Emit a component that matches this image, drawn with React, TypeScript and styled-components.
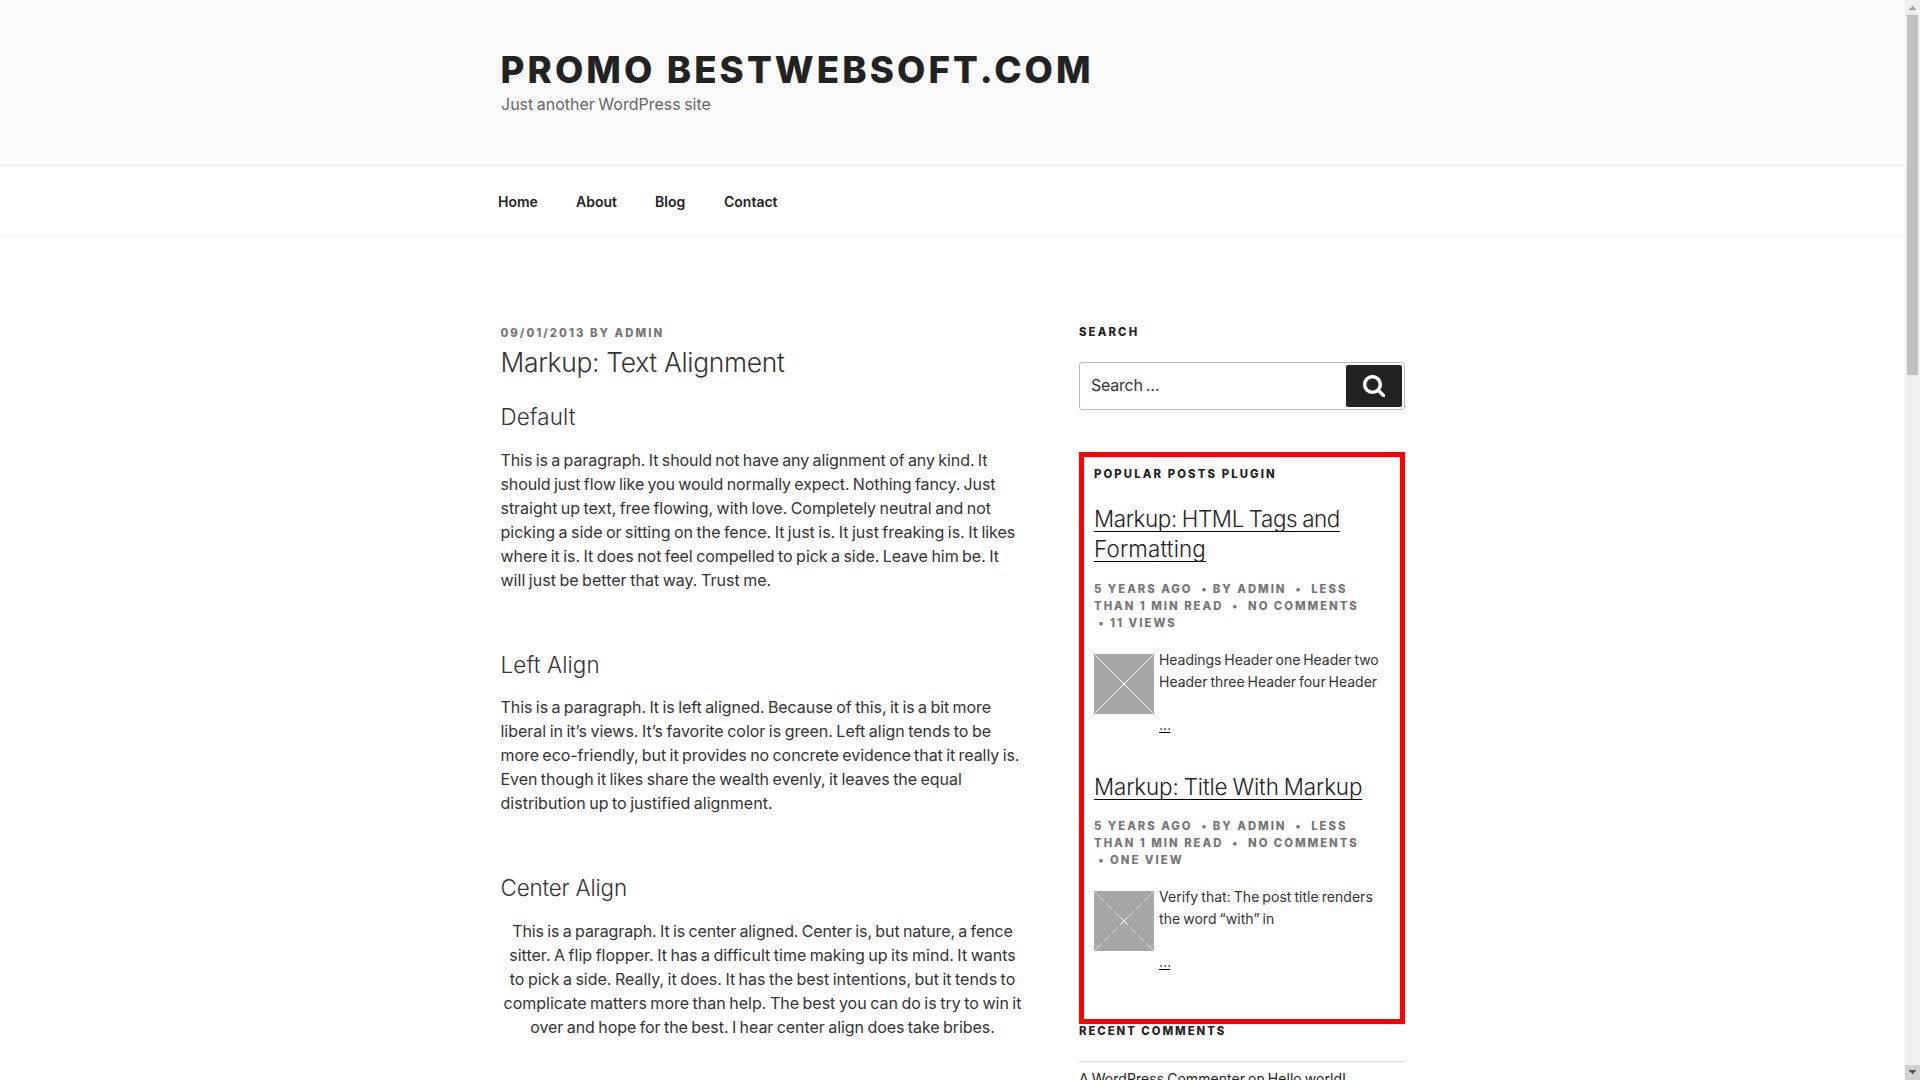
import React from "react";
import styled, { createGlobalStyle } from "styled-components";

const GlobalStyle = createGlobalStyle`
  *, *::before, *::after { box-sizing: border-box; }
  html, body { margin: 0; padding: 0; background: #fff; }
  body { overflow: hidden; }
  h1, h2, h3, p, ul { margin: 0; padding: 0; font-weight: inherit; }
`;

const Window = styled.div`
  display: flex;
  width: 100%;
  height: 1080px;
  overflow: hidden;
  font-family: Inter, "Open Sans", sans-serif;
  font-size: 16px;
  line-height: 24px;
  color: #333;
`;

const Page = styled.div`
  flex: 1;
  min-width: 0;
  overflow: hidden;
`;

const Header = styled.header`
  height: 166px;
  padding: 48px 0 0 500px;
  background: #fafafa;
  border-bottom: 1px solid #eee;
`;

const SiteTitle = styled.h1`
  padding-left: 0.5px;
  font-size: 36.7px;
  font-weight: 800;
  line-height: 44px;
  letter-spacing: 3.1px;
  color: #222;
  white-space: nowrap;
`;

const Tagline = styled.p`
  padding-left: 1px;
  color: #666;
  word-spacing: -1px;
`;

const Nav = styled.nav`
  display: flex;
  height: 71px;
  padding: 24px 0 0 498px;
  border-bottom: 1px solid #eee;
`;

const NavLink = styled.a<{ $width: number }>`
  width: ${(p) => p.$width}px;
  font-size: 14px;
  font-weight: 600;
  color: #222;
  white-space: nowrap;
`;

const Content = styled.main`
  display: flex;
  justify-content: space-between;
  width: 904.5px;
  margin-left: 500.5px;
  padding-top: 86px;
`;

const Article = styled.article`
  width: 524px;
  padding-top: 1px;
`;

const EntryMeta = styled.div`
  font-size: 11.3px;
  font-weight: 800;
  line-height: 18px;
  letter-spacing: 2.04px;
  color: #767676;
  white-space: nowrap;
`;

const EntryTitle = styled.h2`
  margin-top: 3px;
  font-size: 26.4px;
  font-weight: 300;
  line-height: 34px;
  letter-spacing: -0.3px;
`;

const SectionTitle = styled.h3<{ $before: number; $after: number; $tracking: number }>`
  margin-top: ${(p) => p.$before}px;
  margin-bottom: ${(p) => p.$after}px;
  font-size: 22.4px;
  font-weight: 300;
  line-height: 30px;
  letter-spacing: ${(p) => p.$tracking}px;
`;

const Paragraph = styled.p<{ $align?: string }>`
  text-align: ${(p) => p.$align ?? "left"};
  word-spacing: -1px;
`;

const Line = styled.span<{ $tracking: number }>`
  display: block;
  letter-spacing: ${(p) => p.$tracking}px;
  white-space: nowrap;
`;

const Sidebar = styled.aside`
  width: 326px;
`;

const WidgetTitle = styled.h2<{ $tracking: number }>`
  margin-bottom: 21px;
  font-size: 11.3px;
  font-weight: 800;
  line-height: 18px;
  letter-spacing: ${(p) => p.$tracking}px;
  color: #222;
  white-space: nowrap;
`;

const SearchForm = styled.div`
  display: flex;
  align-items: center;
  justify-content: space-between;
  height: 48px;
  padding: 0 2px 0 11px;
  border: 1px solid #bbb;
  border-radius: 3px;
`;

const SearchText = styled.span`
  padding-bottom: 2px;
  letter-spacing: -0.25px;
  word-spacing: -1px;
`;

const SearchButton = styled.button`
  display: flex;
  align-items: center;
  justify-content: center;
  width: 56px;
  height: 42px;
  padding: 0;
  border: 0;
  border-radius: 2px;
  background: #222;
`;

const PopularWidget = styled.section`
  height: 572px;
  margin-top: 42px;
  padding: 8px 10px 0;
  border: 5px solid #f00;
`;

const Post = styled.article`
  & + & {
    margin-top: 36px;
  }
`;

const PostTitle = styled.h3`
  margin-bottom: 16.5px;
  font-size: 22.4px;
  font-weight: 300;
  line-height: 30px;
  color: #222;
  word-spacing: -1px;
`;

const TitleLink = styled.a`
  text-decoration: underline solid #000 1px;
  text-underline-offset: 4px;
  text-decoration-skip-ink: none;
`;

const PostMeta = styled.div`
  margin-bottom: 17px;
  font-size: 11.3px;
  font-weight: 800;
  line-height: 17px;
  color: #767676;
`;

const PostBody = styled.div`
  display: flex;
  gap: 5px;
  height: 87px;
`;

const Thumb = styled.svg`
  flex: none;
  width: 60px;
  height: 60px;
  margin-top: 5px;
  background: #a7a7a7;
`;

const Excerpt = styled.div`
  font-size: 14px;
  line-height: 22px;
  word-spacing: -1px;
`;

const More = styled.a`
  display: inline-block;
  margin-top: 21px;
  color: #222;
  letter-spacing: -0.8px;
  text-decoration: underline solid #000 1px;
  text-underline-offset: 2px;
  text-decoration-skip-ink: none;
`;

const RecentComments = styled.section`
  margin-top: -2px;
`;

const CommentItem = styled.div`
  padding-top: 6px;
  border-top: 1px solid #ddd;
  font-size: 14px;
  line-height: 22px;
  color: #222;
  word-spacing: -1px;
`;

const Scrollbar = styled.div`
  display: flex;
  flex-direction: column;
  width: 15px;
  height: 1080px;
  background: #f0f0f0;
`;

const ArrowButton = styled.div<{ $down?: boolean }>`
  display: flex;
  width: 15px;
  height: 15px;
  background: ${(p) => (p.$down ? "#d2d2d2" : "#f0f0f0")};
`;

const Track = styled.div`
  flex: 1;
`;

const ScrollThumb = styled.div`
  width: 11px;
  height: 360px;
  margin-left: 2px;
  background: #c0c0c0;
`;

type TextLine = [string, number];

const lines = (items: TextLine[]) =>
  items.map(([text, tracking]) => (
    <Line key={text} $tracking={tracking}>
      {text}
    </Line>
  ));

const defaultText: TextLine[] = [
  ["This is a paragraph. It should not have any alignment of any kind. It", -0.083],
  ["should just flow like you would normally expect. Nothing fancy. Just", -0.107],
  ["straight up text, free flowing, with love. Completely neutral and not", -0.03],
  ["picking a side or sitting on the fence. It just is. It just freaking is. It likes", -0.014],
  ["where it is. It does not feel compelled to pick a side. Leave him be. It", -0.035],
  ["will just be better that way. Trust me.", 0.02],
];

const leftText: TextLine[] = [
  ["This is a paragraph. It is left aligned. Because of this, it is a bit more", -0.055],
  ["liberal in it’s views. It’s favorite color is green. Left align tends to be", -0.01],
  ["more eco-friendly, but it provides no concrete evidence that it really is.", -0.066],
  ["Even though it likes share the wealth evenly, it leaves the equal", -0.046],
  ["distribution up to justified alignment.", 0.02],
];

const centerText: TextLine[] = [
  ["This is a paragraph. It is center aligned. Center is, but nature, a fence", -0.11],
  ["sitter. A flip flopper. It has a difficult time making up its mind. It wants", 0.012],
  ["to pick a side. Really, it does. It has the best intentions, but it tends to", -0.01],
  ["complicate matters more than help. The best you can do is try to win it", 0.008],
  ["over and hope for the best. I hear center align does take bribes.", -0.055],
];

const posts: { title: TextLine[]; views: string; excerpt: TextLine[] }[] = [
  {
    title: [
      ["Markup: HTML Tags and", -0.38],
      ["Formatting", 0.16],
    ],
    views: "11 VIEWS",
    excerpt: [
      ["Headings Header one Header two", -0.04],
      ["Header three Header four Header", -0.01],
    ],
  },
  {
    title: [["Markup: Title With Markup", -0.14]],
    views: "ONE VIEW",
    excerpt: [
      ["Verify that: The post title renders", 0.04],
      ["the word “with” in", 0.05],
    ],
  },
];

const SearchIcon = () => (
  <svg width="22.4" height="22.4" viewBox="0 2 26 26" fill="#fff">
    <path d="M18 13c0-3.859-3.141-7-7-7s-7 3.141-7 7 3.141 7 7 7 7-3.141 7-7zM26 26c0 1.094-0.906 2-2 2-0.531 0-1.047-0.219-1.406-0.594l-5.359-5.344c-1.828 1.266-4.016 1.937-6.234 1.937-6.078 0-11-4.922-11-11s4.922-11 11-11 11 4.922 11 11c0 2.219-0.672 4.406-1.937 6.234l5.359 5.359c0.359 0.359 0.578 0.875 0.578 1.406z" />
  </svg>
);

const Placeholder = () => (
  <Thumb viewBox="0 0 60 60">
    <path d="M1 1L59 59M59 1L1 59" stroke="#fff" strokeWidth="1" />
    <circle cx="30" cy="30" r="1.2" fill="#fff" />
  </Thumb>
);

export default function App() {
  return (
    <Window>
      <GlobalStyle />
      <Page>
        <Header>
          <SiteTitle>PROMO BESTWEBSOFT.COM</SiteTitle>
          <Tagline>Just another WordPress site</Tagline>
        </Header>
        <Nav>
          <NavLink $width={78}>Home</NavLink>
          <NavLink $width={79}>About</NavLink>
          <NavLink $width={69}>Blog</NavLink>
          <NavLink $width={60}>Contact</NavLink>
        </Nav>
        <Content>
          <Article>
            <EntryMeta>09/01/2013 BY ADMIN</EntryMeta>
            <EntryTitle>Markup: Text Alignment</EntryTitle>
            <SectionTitle $before={23} $after={16} $tracking={0.12}>Default</SectionTitle>
            <Paragraph>{lines(defaultText)}</Paragraph>
            <SectionTitle $before={58} $after={15} $tracking={0.13}>Left Align</SectionTitle>
            <Paragraph>{lines(leftText)}</Paragraph>
            <SectionTitle $before={58} $after={16} $tracking={-0.17}>Center Align</SectionTitle>
            <Paragraph $align="center">{lines(centerText)}</Paragraph>
          </Article>
          <Sidebar>
            <WidgetTitle $tracking={2.15}>SEARCH</WidgetTitle>
            <SearchForm>
              <SearchText>Search …</SearchText>
              <SearchButton aria-label="Search">
                <SearchIcon />
              </SearchButton>
            </SearchForm>
            <PopularWidget>
              <WidgetTitle $tracking={2.13}>POPULAR POSTS PLUGIN</WidgetTitle>
              {posts.map((post) => (
                <Post key={post.views}>
                  <PostTitle>
                    {post.title.map(([text, tracking]) => (
                      <Line key={text} $tracking={tracking}>
                        <TitleLink>{text}</TitleLink>
                      </Line>
                    ))}
                  </PostTitle>
                  <PostMeta>
                    <Line $tracking={1.98}>{"5 YEARS AGO\u00a0 • BY ADMIN\u00a0 •\u00a0 LESS"}</Line>
                    <Line $tracking={1.98}>{"THAN 1 MIN READ\u00a0 •\u00a0 NO COMMENTS"}</Line>
                    <Line $tracking={2.03}>{`\u00a0• ${post.views}`}</Line>
                  </PostMeta>
                  <PostBody>
                    <Placeholder />
                    <Excerpt>
                      {lines(post.excerpt)}
                      <More>…</More>
                    </Excerpt>
                  </PostBody>
                </Post>
              ))}
            </PopularWidget>
            <RecentComments>
              <WidgetTitle $tracking={1.98}>RECENT COMMENTS</WidgetTitle>
              <CommentItem>
                <Line $tracking={0.05}>A WordPress Commenter on Hello world!</Line>
              </CommentItem>
            </RecentComments>
          </Sidebar>
        </Content>
      </Page>
      <Scrollbar>
        <ArrowButton>
          <svg width="15" height="15" shapeRendering="crispEdges">
            <path d="M7 6h1v1h1v1h1v1h1v1H4V9h1V8h1V7h1z" fill="#a3a3a3" />
          </svg>
        </ArrowButton>
        <Track>
          <ScrollThumb />
        </Track>
        <ArrowButton $down>
          <svg width="15" height="15" shapeRendering="crispEdges">
            <path d="M4 5h7v1h-1v1H9v1H8v1H7V8H6V7H5V6H4z" fill="#505050" />
          </svg>
        </ArrowButton>
      </Scrollbar>
    </Window>
  );
}
